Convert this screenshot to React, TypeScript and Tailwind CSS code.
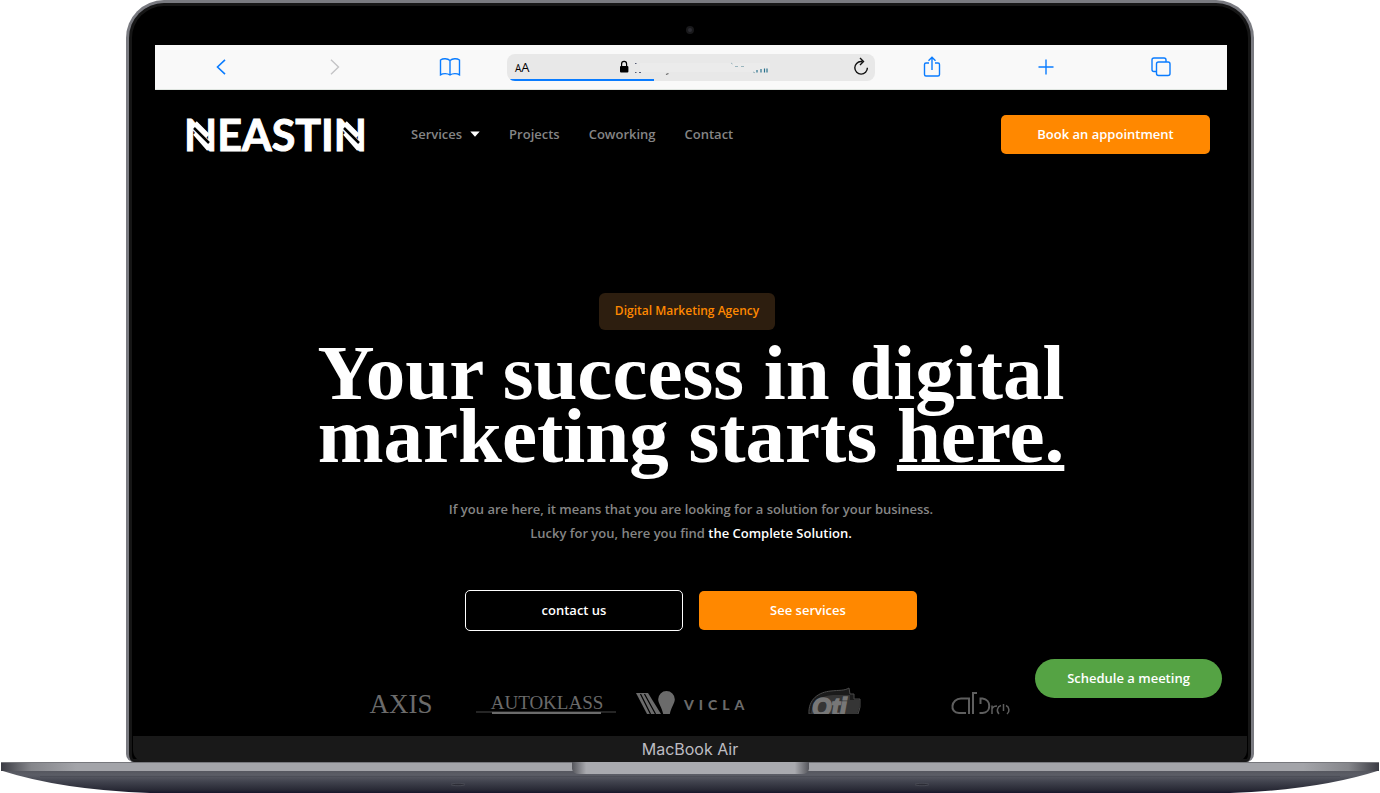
import React from "react";

const navLink = "text-[13px] leading-[18px] font-semibold text-[#858585] hover:text-white";

function ToolbarButton({ label, disabled, children }: { label: string; disabled?: boolean; children: React.ReactNode }) {
  return (
    <button
      type="button"
      aria-label={label}
      disabled={disabled}
      className="flex h-full items-center justify-center text-[#0a7cff] disabled:text-[#c4c4c6]"
    >
      <svg width="24" height="24" viewBox="0 0 24 24" fill="none" stroke="currentColor" strokeWidth="1.4" aria-hidden="true">
        {children}
      </svg>
    </button>
  );
}

function AddressBar() {
  return (
    <div className="relative flex h-[27px] items-center overflow-hidden rounded-lg bg-[#e8e8e8] pr-1.5 pl-2 text-black">
      <button type="button" aria-label="Text size" className="flex items-baseline leading-5">
        <span className="text-[10px]">A</span>
        <span className="text-[13px]">A</span>
      </button>
      <svg className="ml-[86px]" width="156" height="20" viewBox="0 0 156 20" fill="none" aria-hidden="true">
        <rect x="4" y="9" width="8.4" height="6.6" rx="1" fill="#000" />
        <path d="M5.6 9.5V7a2.5 2.7 0 0 1 5 0v2.5" stroke="#000" strokeWidth="1.2" />
        <path d="M24 6h130v7l-12 2H24z" fill="#ebebeb" />
        <path d="M19 6.500h1.500M19 15.500h1.500M23 15.500h2" stroke="#555b75" strokeWidth="1.2" />
        <path d="M50 17.500l2.500-1" stroke="#666" strokeWidth="1.2" />
        <path d="M115 6l1.500 1M119 9.500h3M125 9.500h3M137 15l2 .8" stroke="#9ab5bd" strokeWidth="1" />
        <path d="M141 15.500V13M145 15.500v-3.500M148.500 15.500v-4M151 15.500v-4" stroke="#28718c" strokeWidth="1.2" />
      </svg>
      <button type="button" aria-label="Reload" className="ml-auto">
        <svg width="16" height="20" viewBox="0 0 16 20" fill="none" stroke="#111" strokeWidth="1.400" aria-hidden="true">
          <path d="M9.500 4.500H8a6.300 6.300 0 1 0 6.400 6.300M7 1l3.500 3.500L7 8" />
        </svg>
      </button>
      <div className="absolute bottom-0 left-[3px] h-0.5 w-[39%] bg-[#0a7cff]" />
    </div>
  );
}

function Toolbar() {
  return (
    <div className="grid h-[45px] grid-cols-[1fr_1fr_1fr_368px_1fr_1fr_1fr] items-center border-b border-[#dfe5e0] bg-[#f9f9f9] px-[9px]">
      <ToolbarButton label="Back"><path d="M16 4.800 8.500 12l7.500 7.200" strokeWidth="1.600" /></ToolbarButton>
      <ToolbarButton label="Forward" disabled><path d="m8 4.800 7.500 7.200L8 19.200" /></ToolbarButton>
      <ToolbarButton label="Bookmarks">
        <path d="M12 5.500C9.500 3.300 5 3.300 2.500 5v14.800c2.500-1.600 7-1.600 9.500.2 2.500-1.800 7-1.800 9.500-.2V5C19 3.300 14.500 3.300 12 5.500zV20" />
      </ToolbarButton>
      <AddressBar />
      <ToolbarButton label="Share">
        <path d="M9 8H6a1.500 1.500 0 0 0-1.500 1.500v10A1.500 1.500 0 0 0 6 21h12a1.500 1.500 0 0 0 1.500-1.500v-10A1.500 1.500 0 0 0 18 8h-3M12 15V2.500M8.500 5.800 12 2.300l3.500 3.500" />
      </ToolbarButton>
      <ToolbarButton label="New tab"><path d="M12 4.500v15M4.500 12h15" /></ToolbarButton>
      <ToolbarButton label="Show tabs">
        <rect x="7.500" y="7" width="13.500" height="13.500" rx="2" />
        <path d="M7.500 16.500H5a2 2 0 0 1-2-2V5a2 2 0 0 1 2-2h10a2 2 0 0 1 2 2v2" />
      </ToolbarButton>
    </div>
  );
}

function Logo() {
  return (
    <a href="#" aria-label="Neastin home" className="block">
      <svg width="184" height="38" viewBox="0 0 184 38" className="overflow-visible" aria-hidden="true">
        <text x="-3" y="35" fill="#fff" stroke="#fff" strokeWidth="1" fontFamily="Lato, sans-serif" fontWeight="700" fontSize="43">NEASTIN</text>
        <path d="M8 7 21 20M158 7l13 13M8 17l14 16M158 17l14 16" stroke="#fff" strokeWidth="5" />
        <path d="M7 12 22 27M157 12l15 15" stroke="#000" strokeWidth="2.500" />
      </svg>
    </a>
  );
}

function Header() {
  return (
    <header className="flex items-center pt-[25px] pr-[17px] pl-8">
      <Logo />
      <nav className="ml-10 flex items-center gap-[29px] pb-0.5">
        <button type="button" className={`${navLink} flex items-center gap-2`}>
          Services
          <svg width="10" height="6" viewBox="0 0 10 6" aria-hidden="true"><path d="M.3.500h9.400L5 5.700z" fill="#fff" /></svg>
        </button>
        <a href="#projects" className={navLink}>Projects</a>
        <a href="#coworking" className={navLink}>Coworking</a>
        <a href="#contact" className={navLink}>Contact</a>
      </nav>
      <a href="#book" className="ml-auto flex h-[39px] w-[209px] items-center justify-center rounded-[5px] bg-[#ff8800] text-[13px] font-semibold text-white">
        Book an appointment
      </a>
    </header>
  );
}

function Hero() {
  return (
    <section className="mt-[139px] flex flex-col items-center text-center">
      <div className="pr-2">
        <p className="flex h-[37px] items-center rounded-md bg-[#2d1e0f] px-4 pb-0.5 text-[12px] font-semibold text-[#ff8800]">Digital Marketing Agency</p>
      </div>
      <h1 className="mt-[11px] font-['Liberation_Serif',serif] text-[79px] leading-[63px] font-bold text-white">
        Your success in digital
        <br />
        marketing starts{" "}
        <span className="underline decoration-[6px] underline-offset-[3px] [text-decoration-skip-ink:none]">here.</span>
      </h1>
      <p className="mt-[30px] text-[13px] leading-6 font-semibold text-[#858585]">
        If you are here, it means that you are looking for a solution for your business.
        <br />
        Lucky for you, here you find <span className="text-white">the Complete Solution.</span>
      </p>
      <div className="mt-[45px] flex items-center gap-4 text-[13px] font-semibold text-white">
        <a href="#contact" className="flex h-[41px] w-[218px] items-center justify-center rounded-[5px] border border-white">contact us</a>
        <a href="#services" className="flex h-[39px] w-[218px] items-center justify-center rounded-[5px] bg-[#ff8800]">See services</a>
      </div>
    </section>
  );
}

function Clients() {
  return (
    <section aria-label="Clients" className="mx-auto mt-[56px] grid h-7 w-[725px] grid-cols-5 justify-items-center">
      <svg width="64" height="28" viewBox="0 0 64 28" className="overflow-visible">
        <text x="32" y="26" textAnchor="middle" fill="#6b6b6b" fontFamily="Liberation Serif, serif" fontSize="27">AXIS</text>
      </svg>
      <svg width="140" height="28" viewBox="0 0 140 28" className="overflow-visible">
        <text x="71" y="22" textAnchor="middle" fill="#6b6b6b" fontFamily="Liberation Serif, serif" fontSize="19">AUTOKLASS</text>
        <path d="M0 25h140" stroke="#4a4a4a" strokeWidth="1" />
        <path d="M16 26h109" stroke="#6b6b6b" strokeWidth="2" />
      </svg>
      <svg width="112" height="28" viewBox="0 0 112 28" fill="#6b6b6b" className="overflow-visible">
        <path d="M1 6h12l13 21H12z" />
        <path d="m5.500 7 10 20M9.500 7l11 20" stroke="#000" strokeWidth="1.200" />
        <path d="M31.500 4a8.300 8.300 0 0 1 8.300 8.300c0 4-3.500 7.500-5 14.700h-6.600c-1.500-7.200-5-10.700-5-14.700a8.300 8.300 0 0 1 8.300-8.300z" />
        <text x="49" y="22.500" fontFamily="Lato, sans-serif" fontWeight="900" fontSize="14" className="tracking-[5px]">VICLA</text>
      </svg>
      <svg width="56" height="28" viewBox="0 0 56 28" className="overflow-visible">
        <path d="M1 27C0 12 11 5 23 4c8-1 13 0 18-3l1 6h4v5h6q1 9-2 15z" fill="#1b1b1b" stroke="#4b4b4b" />
        <path d="M3 27C5 13 13 9 25 8h17v5h10q0 8-3 14z" fill="#353535" />
        <text x="4" y="29" fill="#777" stroke="#777" strokeWidth="1.500" fontFamily="Liberation Sans, sans-serif" fontWeight="700" fontStyle="italic" fontSize="25">Oti</text>
        <path d="M0 27h56v6H0z" fill="#000" />
      </svg>
      <svg width="60" height="28" viewBox="0 0 60 28" fill="none" stroke="#5e5e5e" strokeWidth="2">
        <path d="M18 27V11.500H10C0 11.500-2 26 8 26h7" />
        <path d="M22 27V6h4M29.500 17v-5.500h2c9 1 9 14 0 14.500h-3" />
        <path d="M41 27V18.500M41 22q1-3 5-3" strokeWidth="1.500" />
        <path d="M50 18.500a5 5 0 0 0-2 8.500M55 18.500a5 5 0 0 1 1 8.500M52.500 17v7" strokeWidth="1.500" />
      </svg>
    </section>
  );
}

function LaptopBase() {
  return (
    <svg className="block h-[31px] w-full" viewBox="0 0 1380 31" preserveAspectRatio="none" aria-hidden="true">
      <defs>
        <linearGradient id="body" x1="0" y1="0" x2="0" y2="1">
          <stop offset="0" stopColor="#55565e" />
          <stop offset="0.200" stopColor="#5b5d66" />
          <stop offset="0.500" stopColor="#41434e" />
          <stop offset="0.850" stopColor="#292a36" />
          <stop offset="1" stopColor="#17142a" />
        </linearGradient>
        <linearGradient id="deck">
          <stop offset="0" stopColor="#3b3c44" />
          <stop offset="0.022" stopColor="#85868b" />
          <stop offset="0.055" stopColor="#a3a4a9" />
          <stop offset="0.945" stopColor="#a3a4a9" />
          <stop offset="0.978" stopColor="#85868b" />
          <stop offset="1" stopColor="#3b3c44" />
        </linearGradient>
        <linearGradient id="notch">
          <stop offset="0" stopColor="#55565c" />
          <stop offset="0.060" stopColor="#a9aaaf" />
          <stop offset="0.940" stopColor="#a9aaaf" />
          <stop offset="1" stopColor="#55565c" />
        </linearGradient>
      </defs>
      <path d="M1 8.500Q62 28 150 31H1230Q1318 28 1379 8.500z" fill="url(#body)" />
      <path d="M1 0H1379V9H1z" fill="url(#deck)" />
      <path d="M1 .500H1379" stroke="#77787d" />
      <path d="M572 0h237v7q-1 5-7 5H579q-6 0-7-5z" fill="url(#notch)" />
      <path d="M40 14.500H1340" stroke="#4c4e57" strokeWidth="1" />
      <ellipse cx="458" cy="22.500" rx="7" ry="1.200" fill="#2c2d36" stroke="#555761" strokeWidth="0.600" />
      <ellipse cx="922" cy="22.500" rx="7" ry="1.200" fill="#2c2d36" stroke="#555761" strokeWidth="0.600" />
    </svg>
  );
}

export default function App() {
  return (
    <div className="min-h-screen overflow-hidden bg-white font-['Open_Sans',sans-serif]">
      <div className="mx-[126px] rounded-t-[38px] rounded-b-lg border-3 border-b-0 border-[#797a80] bg-black shadow-[inset_0_0_0_3px_#161616]">
        <div className="flex h-[42px] items-center justify-center pt-[11px]">
          <span className="h-2 w-2 rounded-full border-2 border-[#19191b] bg-[#2c2c32]" />
        </div>
        <main className="relative mr-6 ml-[26px] bg-black pb-[21px]">
          <Toolbar />
          <Header />
          <Hero />
          <Clients />
          <a href="#meeting" className="absolute right-[5px] bottom-[38px] flex h-[39px] w-[187px] items-center justify-center rounded-full bg-[#55a344] text-[13px] font-semibold text-white">
            Schedule a meeting
          </a>
        </main>
        <div className="mx-1 flex h-[26px] items-center justify-center rounded-b-xl bg-[#191919] font-['Inter',sans-serif] text-[16px] text-[#bdbcc2]">
          MacBook Air
        </div>
      </div>
      <LaptopBase />
    </div>
  );
}
